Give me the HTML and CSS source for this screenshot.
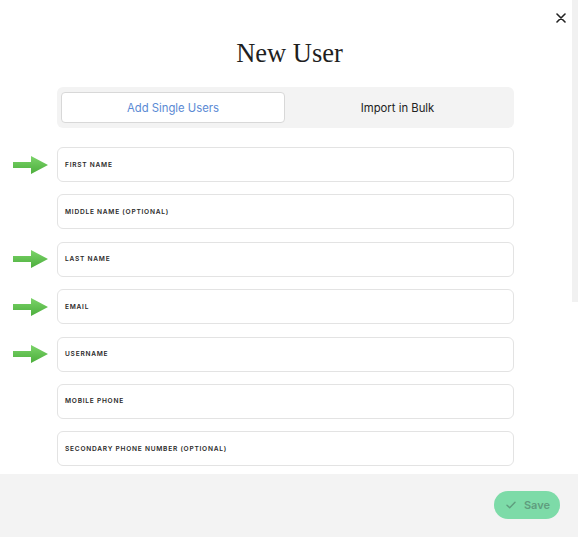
FILE: index.html
```html
<!DOCTYPE html>
<html>
<head>
<meta charset="utf-8">
<link rel="stylesheet" href="styles.css">
</head>
<body>
<div class="modal">
  <div class="scrolltrack"></div>
  <button class="close" aria-label="Close">
    <svg width="10" height="10" viewBox="0 0 10 10"><path d="M1 1L9 9M9 1L1 9" stroke="#222" stroke-width="1.6" stroke-linecap="round"/></svg>
  </button>
  <div class="content">
    <h1 class="title">New User</h1>
    <div class="tabs">
      <div class="tab active">Add Single Users</div>
      <div class="tab">Import in Bulk</div>
    </div>
    <div class="fields">
      <div class="row"><div class="mark"><svg class="arrow" width="36" height="20" viewBox="0 0 36 20"><defs><linearGradient id="g" x1="0" y1="0" x2="0" y2="1"><stop offset="0" stop-color="#7cd46a"/><stop offset="1" stop-color="#4cae3c"/></linearGradient></defs><path d="M0 7H18V1L35 10L18 19V13H0Z" fill="url(#g)"/></svg></div><div class="field">FIRST NAME</div></div>
      <div class="row"><div class="mark"></div><div class="field">MIDDLE NAME (OPTIONAL)</div></div>
      <div class="row"><div class="mark"><svg class="arrow" width="36" height="20" viewBox="0 0 36 20"><path d="M0 7H18V1L35 10L18 19V13H0Z" fill="url(#g)"/></svg></div><div class="field">LAST NAME</div></div>
      <div class="row"><div class="mark"><svg class="arrow" width="36" height="20" viewBox="0 0 36 20"><path d="M0 7H18V1L35 10L18 19V13H0Z" fill="url(#g)"/></svg></div><div class="field">EMAIL</div></div>
      <div class="row"><div class="mark"><svg class="arrow" width="36" height="20" viewBox="0 0 36 20"><path d="M0 7H18V1L35 10L18 19V13H0Z" fill="url(#g)"/></svg></div><div class="field">USERNAME</div></div>
      <div class="row"><div class="mark"></div><div class="field">MOBILE PHONE</div></div>
      <div class="row"><div class="mark"></div><div class="field">SECONDARY PHONE NUMBER (OPTIONAL)</div></div>
    </div>
  </div>
  <div class="footer">
    <button class="save">
      <svg width="10" height="8" viewBox="0 0 10 8"><path d="M1 4.2L3.7 6.8L9 1.2" fill="none" stroke="#5f9d7e" stroke-width="1.4" stroke-linecap="round" stroke-linejoin="round"/></svg>
      <span>Save</span>
    </button>
  </div>
</div>
</body>
</html>
```
FILE: styles.css
```css
* { box-sizing: border-box; }
html, body { margin: 0; padding: 0; background: #fff; }
body { font-family: Inter, "Noto Sans", sans-serif; }
.modal {
  position: relative;
  width: 578px;
  height: 537px;
  display: flex;
  flex-direction: column;
  overflow: hidden;
}
.scrolltrack {
  position: absolute;
  right: 0;
  top: 0;
  width: 6px;
  height: 302px;
  background: #f1f1f1;
}
.close {
  position: absolute;
  left: 556px;
  top: 13px;
  width: 10px;
  height: 10px;
  padding: 0;
  border: 0;
  background: none;
  display: flex;
}
.content {
  flex: 1;
  padding-top: 34px;
}
.title {
  margin: 0;
  text-align: center;
  font-family: "Liberation Serif", "DejaVu Serif", serif;
  font-weight: 400;
  font-size: 26.5px;
  line-height: 38px;
  color: #1f1f1f;
  padding-left: 1px;
}
.tabs {
  margin: 15px 0 0 57px;
  width: 457px;
  height: 41px;
  background: #f3f3f3;
  border-radius: 6px;
  padding: 5px 4px;
  display: flex;
}
.tab {
  flex: 1;
  display: flex;
  align-items: center;
  justify-content: center;
  font-size: 11.3px;
  color: #222;
}
.tab.active {
  flex: 0 0 224px;
  background: #fff;
  border: 1px solid #d8d8d8;
  border-radius: 4px;
  color: #5b8ad4;
}
.fields {
  margin-top: 19px;
  display: flex;
  flex-direction: column;
  gap: 12.4px;
}
.row {
  display: flex;
  align-items: center;
}
.mark {
  width: 57px;
  height: 35px;
  display: flex;
  align-items: center;
  padding-left: 13px;
}
.field {
  width: 457px;
  height: 35px;
  border: 1px solid #e3e3e3;
  border-radius: 6px;
  display: flex;
  align-items: center;
  padding-left: 7px;
  font-size: 6.6px;
  font-weight: 600;
  letter-spacing: 0.75px;
  color: #2a2a2a;
}
.footer {
  height: 63px;
  background: #f3f3f3;
  display: flex;
  align-items: center;
  justify-content: flex-end;
  padding: 0 18px 2px 0;
}
.save {
  width: 66px;
  height: 28px;
  border: 0;
  border-radius: 14px;
  background: #7ddba8;
  display: flex;
  align-items: center;
  justify-content: center;
  gap: 8px;
  font-family: Inter, "Noto Sans", sans-serif;
  font-size: 11px;
  font-weight: 600;
  color: #5f9d7e;
  padding: 0 0 0 2px;
}
```
